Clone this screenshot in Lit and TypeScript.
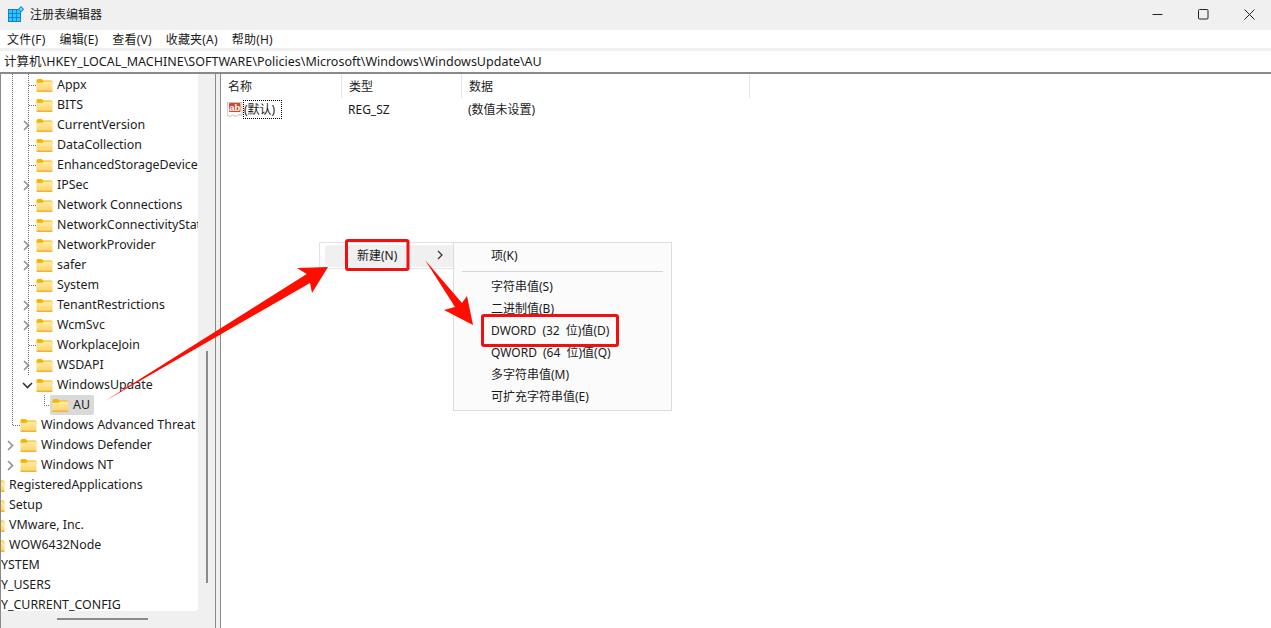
import { LitElement, html, css, svg } from "lit";
import { customElement } from "lit/decorators.js";

type Node = { t: string; l: number; c?: "r" | "d"; f?: boolean; sel?: boolean };

const TREE: Node[] = [
  { t: "Appx", l: 5, f: true },
  { t: "BITS", l: 5, f: true },
  { t: "CurrentVersion", l: 5, f: true, c: "r" },
  { t: "DataCollection", l: 5, f: true },
  { t: "EnhancedStorageDevice", l: 5, f: true },
  { t: "IPSec", l: 5, f: true, c: "r" },
  { t: "Network Connections", l: 5, f: true },
  { t: "NetworkConnectivityStat", l: 5, f: true },
  { t: "NetworkProvider", l: 5, f: true, c: "r" },
  { t: "safer", l: 5, f: true, c: "r" },
  { t: "System", l: 5, f: true },
  { t: "TenantRestrictions", l: 5, f: true, c: "r" },
  { t: "WcmSvc", l: 5, f: true, c: "r" },
  { t: "WorkplaceJoin", l: 5, f: true },
  { t: "WSDAPI", l: 5, f: true, c: "r" },
  { t: "WindowsUpdate", l: 5, f: true, c: "d" },
  { t: "AU", l: 6, f: true, sel: true },
  { t: "Windows Advanced Threat", l: 4, f: true },
  { t: "Windows Defender", l: 4, f: true, c: "r" },
  { t: "Windows NT", l: 4, f: true, c: "r" },
  { t: "RegisteredApplications", l: 2, f: true },
  { t: "Setup", l: 2, f: true },
  { t: "VMware, Inc.", l: 2, f: true },
  { t: "WOW6432Node", l: 2, f: true },
  { t: "YSTEM", l: 1.5 },
  { t: "Y_USERS", l: 1.5 },
  { t: "Y_CURRENT_CONFIG", l: 1.5 },
];

const MENUS = ["文件(F)", "编辑(E)", "查看(V)", "收藏夹(A)", "帮助(H)"];
const SUBMENU = [
  "字符串值(S)",
  "二进制值(B)",
  "DWORD (32 位)值(D)",
  "QWORD (64 位)值(Q)",
  "多字符串值(M)",
  "可扩充字符串值(E)",
];

const folder = html`<svg class="folder" width="17" height="15" viewBox="0 0 17 15">
  <path d="M0.5 2.500q0-1.500 1.500-1.500h3.600l1.600 1.500h7.800q1.500 0 1.500 1.500v2H0.500z" fill="#f6b500" />
  <path d="M0.500 4.800h6l1.600-1.200h7.400q1 0 1 1v8.400q0 1-1 1H1.500q-1 0-1-1z" fill="url(#fg)" />
  <path d="M0.500 13v-.5h16v.5q0 1-1 1H1.500q-1 0-1-1z" fill="#efb23c" />
</svg>`;

const chevR = html`<svg class="chev" width="9" height="11" viewBox="0 0 9 11"><path d="M2 1l4.500 4.500L2 10" fill="none" stroke="#8f8f8f" stroke-width="1.600" /></svg>`;
const chevD = html`<svg class="chev" width="11" height="9" viewBox="0 0 11 9"><path d="M1 2l4.500 4.500L10 2" fill="none" stroke="#333" stroke-width="1.600" /></svg>`;

@customElement("app-root")
export class AppRoot extends LitElement {
  static styles = css`
    :host {
      display: block;
      position: relative;
      width: 1271px;
      height: 628px;
      overflow: hidden;
      background: #fff;
      color: #1a1a1a;
      font-family: "Noto Sans", "Noto Sans CJK SC", sans-serif;
      font-size: 12.4px;
    }
    .defs { position: absolute; width: 0; height: 0; }
    .titlebar {
      height: 30px;
      box-sizing: border-box;
      padding: 0 0 2px 8px;
      background: #f0f0f0;
      display: flex;
      align-items: center;
      font-size: 12px;
    }
    .app-icon { margin-right: 5px; }
    .title { flex: 1; }
    .ctrl { width: 46px; display: flex; justify-content: center; }
    .close { margin-right: -1px; }
    .menubar {
      height: 18px;
      display: flex;
      align-items: center;
      padding-left: 7px;
      font-size: 12px;
      letter-spacing: 0.2px;
    }
    .menubar span { margin-right: 14px; }
    .band { height: 3px; background: #f0f0f0; }
    .address {
      height: 21px;
      box-sizing: content-box;
      display: flex;
      align-items: center;
      padding-left: 4px;
      font-size: 12.5px;
      border-bottom: 2px solid #8a8a8a;
      white-space: nowrap;
    }
    .address span { position: relative; top: -1px; }
    .main { display: flex; height: 554px; }
    .left {
      width: 215px;
      flex: none;
      background: #f0f0f0;
      border-left: 1px solid #8a8a8a;
      box-sizing: border-box;
      display: grid;
      grid-template-columns: 197px 17px;
      grid-template-rows: 537px 17px;
    }
    .tree {
      background: #fff;
      overflow: hidden;
      position: relative;
      border-bottom-right-radius: 3px;
      padding-top: 1px;
      box-sizing: border-box;
    }
    .inner { margin-left: -24px; width: 500px; position: relative; }
    .row {
      height: 20px;
      display: flex;
      align-items: center;
      white-space: nowrap;
      position: relative;
      color: #1c1c1c;
    }
    .ico { width: 17px; height: 15px; margin-right: 4px; flex: none; display: flex; position: relative; }
    .txt { position: relative; top: -1px; }
    .wrap { position: relative; display: flex; align-items: center; }
    .sel::before {
      content: "";
      position: absolute;
      left: -2px;
      top: 0;
      width: 44px;
      height: 20px;
      background: #d9d9d9;
      border-radius: 2px;
    }
    .sel { height: 20px; }
    .chevbox { position: absolute; display: flex; }
    .guides { position: absolute; left: 0; top: 0; pointer-events: none; }
    .vbar { display: flex; justify-content: center; padding-top: 277px; box-sizing: border-box; }
    .vthumb { width: 2px; height: 232px; background: #8a8a8a; }
    .hbar { padding: 7px 0 0 56px; box-sizing: border-box; }
    .hthumb { width: 91px; height: 2px; background: #8a8a8a; }
    .corner { background: #f0f0f0; }
    .splitter {
      width: 6px;
      flex: none;
      box-sizing: border-box;
      background: #f0f0f0;
      border-left: 1px solid #8a8a8a;
      border-right: 1px solid #8a8a8a;
    }
    .list { flex: 1; position: relative; }
    .head {
      height: 24px;
      display: grid;
      grid-template-columns: 121px 120px 288px;
      font-size: 12px;
      color: #1c1c1c;
    }
    .head div {
      padding-left: 7px;
      border-right: 1px solid #e5e5e5;
      display: flex;
      align-items: center;
    }
    .entry {
      height: 22px;
      display: grid;
      grid-template-columns: 121px 120px 288px;
      align-items: center;
      font-size: 12px;
    }
    .name { display: flex; align-items: center; padding-left: 6px; }
    .focus {
      border: 1px dotted #000;
      height: 19px;
      width: 39px;
      box-sizing: border-box;
      display: flex;
      align-items: center;
    }
    .val { padding-left: 6px; }
    .menus {
      position: absolute;
      left: 319px;
      top: 242px;
      display: flex;
      align-items: flex-start;
      font-size: 12px;
    }
    .menu1 {
      width: 134px;
      height: 27px;
      box-sizing: border-box;
      background: #fff;
      border: 1px solid #e3e3e3;
      border-right: 0;
      padding: 2px 0 0 5px;
    }
    .item1 {
      height: 22px;
      box-sizing: border-box;
      background: #f0f0f0;
      border-radius: 4px 0 0 4px;
      display: flex;
      align-items: center;
      justify-content: space-between;
      padding: 0 9px 2px 32px;
    }
    .menu2 {
      width: 219px;
      height: 169px;
      box-sizing: border-box;
      border: 1px solid #dcdcdc;
      background: #fbfbfb;
      padding: 1px 8px;
    }
    .mi {
      height: 22px;
      display: flex;
      align-items: center;
      padding-left: 29px;
      white-space: pre;
      word-spacing: 3px;
    }
    .sep { height: 1px; background: #d5d5d5; margin: 5px 0 3px; }
    .marks { position: absolute; left: 0; top: 0; pointer-events: none; }
  `;

  render() {
    return html`
      <svg class="defs"><defs>
        <linearGradient id="fg" x1="0" y1="0" x2="0" y2="1">
          <stop offset="0" stop-color="#ffeca0" />
          <stop offset="1" stop-color="#fcd26a" />
        </linearGradient>
      </defs></svg>
      <div class="titlebar">
        <svg class="app-icon" width="17" height="17" viewBox="0 0 17 17">
          <rect x="0" y="3" width="13" height="13" fill="#0a84d6" />
          <g fill="#35c4fa">
            <rect x="1" y="4" width="3" height="3" /><rect x="5" y="4" width="3" height="3" /><rect x="9" y="4" width="3" height="3" />
            <rect x="1" y="8" width="3" height="3" /><rect x="5" y="8" width="3" height="3" /><rect x="9" y="8" width="3" height="3" />
            <rect x="1" y="12" width="3" height="3" /><rect x="5" y="12" width="3" height="3" /><rect x="9" y="12" width="3" height="3" />
          </g>
          <path d="M13 0l3.200 3.200L13 6.400 9.800 3.200z" fill="#1f8fd8" />
          <path d="M13 1.500l1.700 1.700L13 4.900l-1.700-1.700z" fill="#7fd8fb" />
        </svg>
        <span class="title">注册表编辑器</span>
        <div class="ctrl"><svg width="11" height="11" viewBox="0 0 11 11"><path d="M0.500 5.500h10" stroke="#222" /></svg></div>
        <div class="ctrl"><svg width="11" height="11" viewBox="0 0 11 11"><rect x=".5" y=".5" width="9.500" height="9.500" rx="1" fill="none" stroke="#222" /></svg></div>
        <div class="ctrl close"><svg width="11" height="11" viewBox="0 0 11 11"><path d="M.5.5l10 10M10.500.5l-10 10" stroke="#222" /></svg></div>
      </div>
      <div class="menubar">${MENUS.map((m) => html`<span>${m}</span>`)}</div>
      <div class="band"></div>
      <div class="address"><span>计算机\\HKEY_LOCAL_MACHINE\\SOFTWARE\\Policies\\Microsoft\\Windows\\WindowsUpdate\\AU</span></div>
      <div class="main">
        <div class="left">
          <div class="tree">
            <svg class="guides" width="197" height="537">
              <g stroke="#6e6e6e" stroke-width="1" stroke-dasharray="1 1" fill="none">
                <path d="M11.500 0V351" />
                <path d="M27.500 0V301" />
                ${[10, 30, 70, 90, 130, 150, 210, 270].map((y) => svg`<path d=${`M28 ${y + 1}.5h7`} />`)}
                <path d="M43.500 321V331.500h6" />
                <path d="M12 351.500h7" />
              </g>
            </svg>
            <div class="inner">${TREE.map((n) => this.row(n))}</div>
          </div>
          <div class="vbar"><div class="vthumb"></div></div>
          <div class="hbar"><div class="hthumb"></div></div>
          <div class="corner"></div>
        </div>
        <div class="splitter"></div>
        <div class="list">
          <div class="head">
            <div>名称</div>
            <div>类型</div>
            <div>数据</div>
          </div>
          <div class="entry">
            <div class="name">
              <svg width="16" height="17" viewBox="0 0 16 17">
                <path d="M.5 1.500h14.500v13l-3-1-3 2-3-1.500-3 1.500-3-1.500z" fill="#fafafa" stroke="#c4c4c4" />
                <rect x="2" y="2" width="11.500" height="9" fill="#d8452a" rx="1" />
                <text x="7.700" y="9.500" font-size="9.500" font-weight="700" fill="#fff" text-anchor="middle" font-family="Liberation Sans">ab</text>
              </svg>
              <div class="focus">(默认)</div>
            </div>
            <div class="val">REG_SZ</div>
            <div class="val">(数值未设置)</div>
          </div>
        </div>
      </div>
      <div class="menus">
        <div class="menu1">
          <div class="item1"><span>新建(N)</span>
            <svg width="7" height="10" viewBox="0 0 7 10"><path d="M1 1l4 4-4 4" fill="none" stroke="#333" stroke-width="1.200" /></svg>
          </div>
        </div>
        <div class="menu2">
          <div class="mi">项(K)</div>
          <div class="sep"></div>
          ${SUBMENU.map((s) => html`<div class="mi">${s}</div>`)}
        </div>
      </div>
      <svg class="marks" width="1271" height="628">
        <path d="M105 401L306.700 274L297 268L328 267L312 293L310 283Z" fill="#ff0d00" />
        <path d="M425 260L462 303L467 296L473 325L444 310L455 307Z" fill="#ff0d00" />
        <rect x="346.500" y="240.500" width="61.500" height="29" rx="1.500" fill="none" stroke="#f01010" stroke-width="3" />
        <rect x="482.500" y="315.500" width="135" height="30" rx="1.500" fill="none" stroke="#f01010" stroke-width="3" />
      </svg>
    `;
  }

  row(n: Node) {
    const x = n.l * 16;
    const pad = n.f ? x - 21 : x;
    return html`<div class="row" style="padding-left:${pad}px">
      ${n.c === "r" ? html`<span class="chevbox" style="left:${x - 35}px;top:5px">${chevR}</span>` : ""}
      ${n.c === "d" ? html`<span class="chevbox" style="left:${x - 35}px;top:6px">${chevD}</span>` : ""}
      ${n.f
        ? html`<span class=${n.sel ? "wrap sel" : "wrap"}><span class="ico">${folder}</span><span class="txt">${n.t}</span></span>`
        : html`<span class="txt">${n.t}</span>`}
    </div>`;
  }
}
